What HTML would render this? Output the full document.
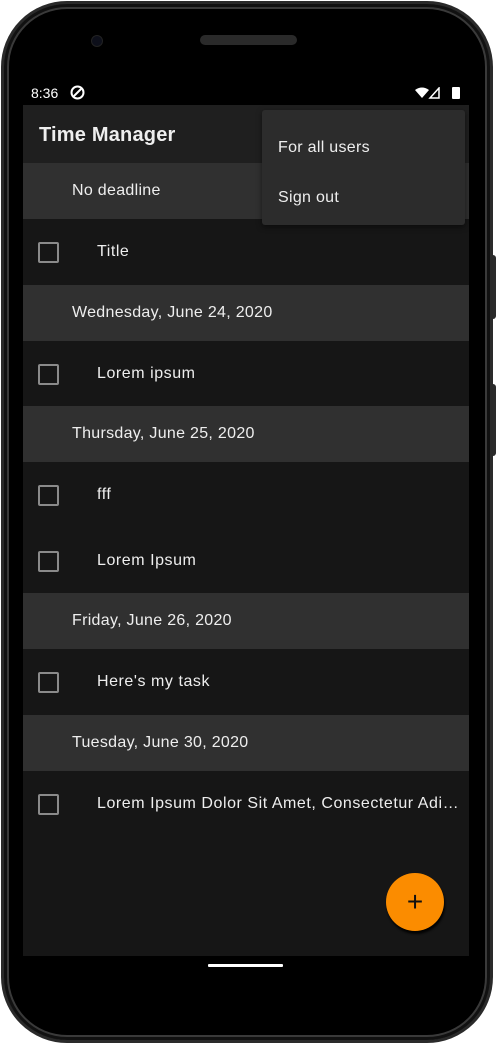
<!DOCTYPE html>
<html><head><meta charset="utf-8"><style>
*{margin:0;padding:0;box-sizing:border-box}
body{width:497px;height:1044px;background:#fff;position:relative;overflow:hidden;font-family:"Liberation Sans",sans-serif}
.phone{position:absolute;left:1px;top:1px;width:492px;height:1042px;border-radius:66px;background:#000;border:3px solid #2a2a2a;box-shadow:inset 0 0 0 3px #111,inset 0 0 0 5px #3a3a3a}
.btn{position:absolute;left:491px;width:5px;background:#2b2b2b;border-radius:0 3px 3px 0}
.screen{position:absolute;left:23px;top:80px;width:446px;height:893px;background:#000;border-radius:0 0 12px 12px;overflow:hidden}
.status{height:25px;color:#fff;font-size:14px;position:relative}
.app{position:absolute;top:25px;left:0;width:446px;height:851px;background:#161616}
.bar{height:58px;background:#1f1f1f;color:#eee;font-size:20px;font-weight:bold;padding:19px 0 0 16px;letter-spacing:0.2px}
.h{height:56px;background:#303030;color:#eee;font-size:16px;padding-left:49px;line-height:56px;letter-spacing:0.3px}
.i{height:65.5px;background:#161616;color:#eee;font-size:16px;padding-left:74px;line-height:65px;position:relative;white-space:nowrap;overflow:hidden;text-overflow:ellipsis;padding-right:9px;letter-spacing:0.55px}
.i:before{content:"";position:absolute;left:15px;top:23px;width:17px;height:17px;border:2px solid #8a8a8a;border-radius:2px}
.menu{position:absolute;left:239px;top:5px;width:203px;height:115px;background:#2c2c2c;border-radius:3px;box-shadow:0 2px 6px rgba(0,0,0,.5);color:#eee;font-size:16px;letter-spacing:0.3px}
.fab{position:absolute;left:363px;top:768px;width:58px;height:58px;border-radius:50%;background:#fb8c00;box-shadow:1px 3px 2px rgba(0,0,0,.9);color:#111;font-size:28px;text-align:center;line-height:57px}
</style></head><body>
<div class="btn" style="top:255px;height:64px"></div>
<div class="btn" style="top:384px;height:72px"></div>
<div class="phone"></div>
<div style="position:absolute;left:91px;top:35px;width:12px;height:12px;border-radius:50%;background:#0d0f1a;border:1px solid #222"></div>
<div style="position:absolute;left:200px;top:35px;width:97px;height:10px;border-radius:5px;background:#2a2a2a"></div>
<div class="screen">
 <div class="status"><span style="position:absolute;left:8px;top:5px">8:36</span>
  <svg style="position:absolute;left:47px;top:5px" width="15" height="15" viewBox="0 0 15 15"><circle cx="7.5" cy="7.5" r="6" fill="none" stroke="#fff" stroke-width="2"/><path d="M4 11L11 4" stroke="#fff" stroke-width="2"/></svg>
  <svg style="position:absolute;left:392px;top:7px" width="32" height="12" viewBox="0 0 32 12"><path d="M0 3Q7-2 14 3L7 11Z" fill="#fff"/><path d="M24 1V11H15Z" fill="none" stroke="#fff" stroke-width="1.5"/></svg>
  <div style="position:absolute;left:429px;top:7px;width:8px;height:12px;background:#fff;border-radius:1px"></div>
 </div>
 <div class="app">
  <div class="bar">Time Manager</div>
  <div class="h">No deadline</div>
  <div class="i">Title</div>
  <div class="h">Wednesday, June 24, 2020</div>
  <div class="i">Lorem ipsum</div>
  <div class="h">Thursday, June 25, 2020</div>
  <div class="i">fff</div>
  <div class="i">Lorem Ipsum</div>
  <div class="h">Friday, June 26, 2020</div>
  <div class="i">Here's my task</div>
  <div class="h">Tuesday, June 30, 2020</div>
  <div class="i">Lorem Ipsum Dolor Sit Amet, Consectetur Adipiscing</div>
  <div class="menu"><div style="position:absolute;left:16px;top:29px">For all users</div><div style="position:absolute;left:16px;top:79px">Sign out</div></div>
  <div class="fab">+</div>
 </div>
 <div style="position:absolute;left:185px;top:884px;width:75px;height:3px;background:#fff;border-radius:1px"></div>
</div>
</body></html>
